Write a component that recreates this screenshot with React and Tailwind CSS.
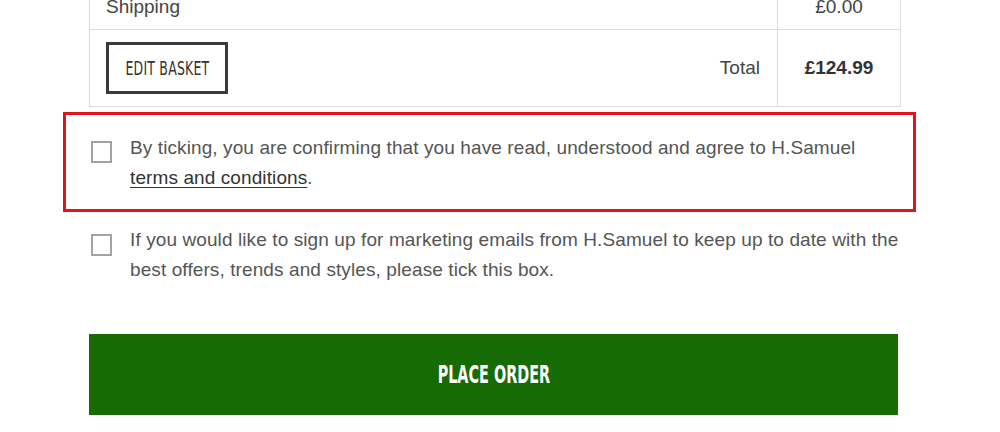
export default function App() {
  const body = { fontFamily: '"Liberation Sans", Arial, sans-serif' };
  const narrow = { fontFamily: '"DejaVu Sans Condensed", "Liberation Sans", sans-serif' };
  return (
    <div className="w-[1000px] h-[432px] bg-white overflow-hidden text-[#555]" style={body}>
      <div className="ml-[89px] w-[812px] border-x border-b border-[#dcdcdc]">
        <div className="flex h-[29px] overflow-hidden">
          <div className="w-[688px] border-r border-[#dcdcdc] pl-[16px]">
            <span className="block -mt-[3px] text-[19px] leading-[19px] text-[#444]">Shipping</span>
          </div>
          <div className="flex-1 flex justify-center">
            <span className="block -mt-[3px] text-[19px] leading-[19px] text-[#444]">£0.00</span>
          </div>
        </div>
        <div className="flex h-[77px] border-t border-[#dcdcdc]">
          <div className="w-[688px] border-r border-[#dcdcdc] pl-[16px] pr-[17px] flex items-center justify-between">
            <div className="w-[122px] h-[52px] border-[3px] border-[#3a3a3a] flex items-center justify-center">
              <span className="inline-block text-[19px] leading-none text-[#333] scale-x-[0.73] tracking-[0.3px] whitespace-nowrap" style={narrow}>EDIT BASKET</span>
            </div>
            <span className="text-[19px] text-[#444]">Total</span>
          </div>
          <div className="flex-1 flex items-center justify-center">
            <span className="text-[19px] font-bold text-[#333]">£124.99</span>
          </div>
        </div>
      </div>

      <div className="ml-[63px] mt-[5px] w-[853px] h-[100px] border-[3px] border-[#e0141c] pl-[25px] pt-[18px] flex items-start">
        <div className="w-[21px] h-[22px] mt-[8px] border-2 border-[#a3a3a3] shrink-0" />
        <p className="ml-[18px] text-[19px] leading-[30px] tracking-[0.1px]">
          By ticking, you are confirming that you have read, understood and agree to H.Samuel
          <br />
          <span className="underline underline-offset-[3px] text-[#333]">terms and conditions</span>.
        </p>
      </div>

      <div className="ml-[91px] mt-[13px] flex items-start">
        <div className="w-[21px] h-[22px] mt-[9px] border-2 border-[#a3a3a3] shrink-0" />
        <p className="ml-[18px] w-[785px] text-[19px] leading-[30px] tracking-[0.1px]">
          If you would like to sign up for marketing emails from H.Samuel to keep up to date with the best offers, trends and styles, please tick this box.
        </p>
      </div>

      <div className="ml-[89px] mt-[49px] w-[809px] h-[81px] bg-[#166b05] flex items-center justify-center">
        <span className="inline-block text-[25px] leading-none font-bold text-white scale-x-[0.64] whitespace-nowrap" style={narrow}>PLACE ORDER</span>
      </div>
    </div>
  );
}
